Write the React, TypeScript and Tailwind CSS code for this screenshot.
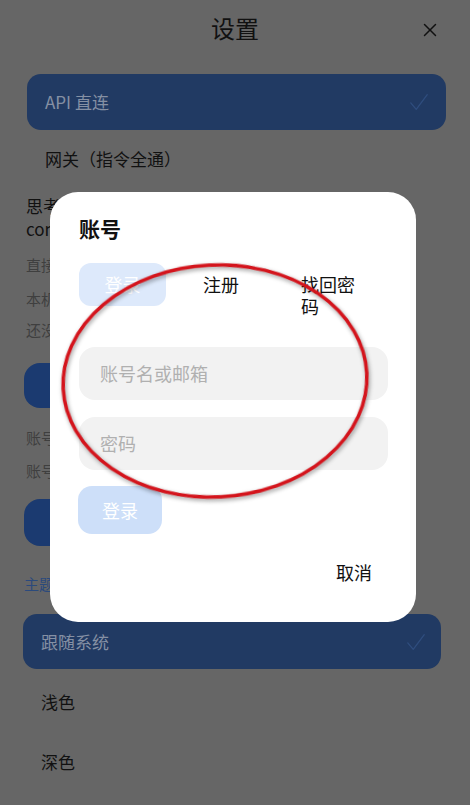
import { X } from "lucide-react";

const font = { fontFamily: '"Noto Sans CJK SC", "Noto Sans", sans-serif' };

function Check() {
  return (
    <svg width="22" height="22" viewBox="0 0 24 24" fill="none" className="text-[#2f4d7e]">
      <path d="M3 13 L9 20 L21 4" stroke="currentColor" strokeWidth="1.4" strokeLinecap="round" strokeLinejoin="round" />
    </svg>
  );
}

function AccountDialog() {
  return (
    <div className="absolute left-[50px] top-[192px] w-[366px] h-[430px] rounded-[28px] bg-white pl-[29px] pr-[28px] pt-[16px] flex flex-col">
      <div className="text-[21px] font-bold text-[#111] leading-[30px] mt-[5px]">账号</div>
      <div className="flex items-start mt-[20px]">
        <button className="w-[87px] h-[43px] rounded-[12px] bg-[#dde9fb] text-white text-[18px] shrink-0">登录</button>
        <button className="ml-[13px] px-6 h-[43px] text-[18px] text-[#111] shrink-0">注册</button>
        <button className="ml-[14px] px-6 text-[18px] text-[#111] leading-[22px] text-left w-[110px] pt-[10px]">找回密码</button>
      </div>
      <div className="mt-[30px] h-[53px] w-[309px] rounded-[16px] bg-[#f2f2f2] flex items-center pl-[21px] text-[18px] text-[#b0b0b0]">
        账号名或邮箱
      </div>
      <div className="mt-[17px] h-[53px] w-[309px] rounded-[16px] bg-[#f2f2f2] flex items-center pl-[21px] text-[18px] text-[#b0b0b0]">
        密码
      </div>
      <button className="mt-[16px] -ml-[1px] w-[84px] h-[48px] rounded-[14px] bg-[#cddff9] text-white text-[18px]">登录</button>
      <div className="flex justify-end mt-[25px] pr-[16px]">
        <span className="text-[18px] text-[#111]">取消</span>
      </div>
    </div>
  );
}

export default function App() {
  return (
    <div className="relative w-[470px] h-[805px] overflow-hidden bg-[#666666]" style={font}>
      <div className="relative h-[56px] flex items-center justify-center">
        <span className="text-[24px] text-[#111]">设置</span>
        <X className="absolute right-[29px] top-[19px] text-[#111]" size={22} strokeWidth={1.6} />
      </div>

      <div className="mt-[18px] ml-[27px] mr-[24px] h-[56px] rounded-[14px] bg-[#213a63] flex items-center justify-between pl-[18px] pr-[16px]">
        <span className="text-[17px] text-[#8590a4]">API 直连</span>
        <Check />
      </div>
      <div className="h-[58px] flex items-center pl-[45px] text-[17px] text-[#111]">网关（指令全通）</div>

      <div className="pl-[26px] pt-[6px] text-[17px] text-[#111] leading-[23px]">
        <div>思考</div>
        <div>cont</div>
      </div>
      <div className="pl-[26px] mt-[8px] text-[15px] text-[#3f3f3f] leading-[33px]">
        <div>直接</div>
        <div className="leading-[35px]">本机</div>
        <div className="leading-[27px]">还没</div>
      </div>
      <div className="ml-[24px] mt-[20px] w-[160px] h-[45px] rounded-[16px] bg-[#1b3a70]" />
      <div className="pl-[26px] mt-[13px] text-[15px] text-[#3f3f3f] leading-[33px]">
        <div>账号</div>
        <div>账号</div>
      </div>
      <div className="ml-[24px] mt-[12px] w-[160px] h-[47px] rounded-[16px] bg-[#1b3a70]" />
      <div className="pl-[24px] mt-[28px] text-[15px] text-[#2b4a7c] leading-[20px]">主题</div>

      <div className="mt-[20px] ml-[23px] mr-[29px] h-[55px] rounded-[14px] bg-[#213a63] flex items-center justify-between pl-[18px] pr-[14px]">
        <span className="text-[17px] text-[#8590a4]">跟随系统</span>
        <Check />
      </div>
      <div className="h-[66px] flex items-center pl-[41px] text-[17px] text-[#111]">浅色</div>
      <div className="h-[54px] flex items-center pl-[41px] text-[17px] text-[#111]">深色</div>

      <AccountDialog />

      <svg className="absolute left-0 top-0 pointer-events-none" width="470" height="805" viewBox="0 0 470 805">
        <ellipse
          cx="215"
          cy="381"
          rx="152"
          ry="116"
          fill="none"
          stroke="#d4141c"
          strokeWidth="3.5"
          transform="rotate(-3 215 381)"
          style={{ filter: "drop-shadow(1px 2px 2px rgba(0,0,0,0.4))" }}
        />
      </svg>
    </div>
  );
}
